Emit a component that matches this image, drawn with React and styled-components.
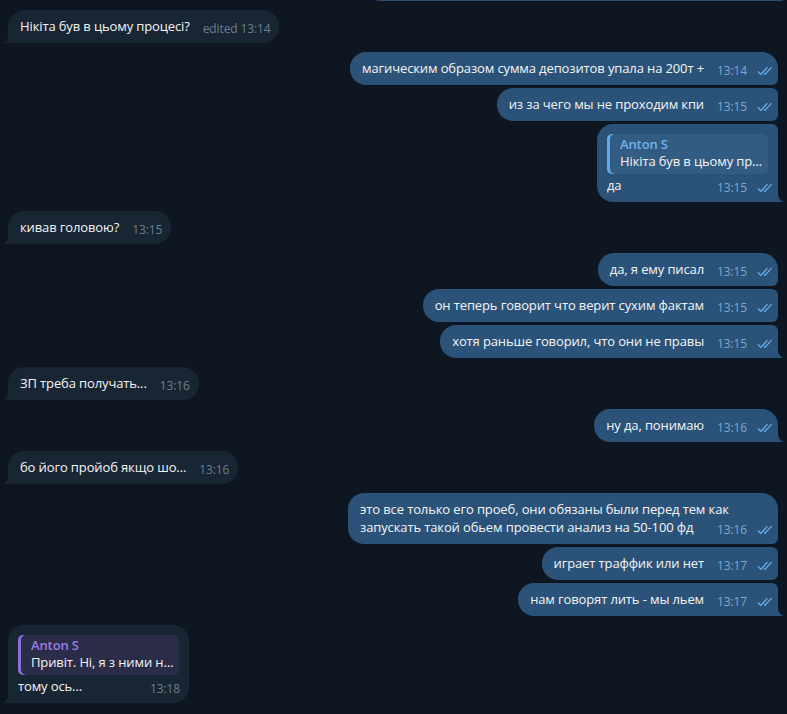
import React from 'react';
import styled, { createGlobalStyle } from 'styled-components';

const GlobalStyle = createGlobalStyle`
  html, body {
    margin: 0;
    padding: 0;
    background: #0e1621;
  }
  body {
    font-family: "Open Sans", "Noto Sans", sans-serif;
  }
`;

const Chat = styled.div`
  height: 714px;
  overflow: hidden;
  display: flex;
  flex-direction: column;
  justify-content: flex-end;
  padding: 0 9px 11px 8px;
  box-sizing: border-box;
  background: #0e1621;
`;

const Row = styled.div`
  display: flex;
  flex-shrink: 0;
  justify-content: ${p => (p.$out ? 'flex-end' : 'flex-start')};
  margin-top: ${p => (p.$groupStart ? '9px' : '3px')};
`;

const BIG = 16;
const SMALL = 6;

const radius = (out, pos) => {
  if (!out) return `${BIG}px ${BIG}px ${BIG}px 0`;
  const tr = pos === 'first' || pos === 'single' ? BIG : SMALL;
  const br = pos === 'last' || pos === 'single' ? 0 : SMALL;
  return `${BIG}px ${tr}px ${br}px ${BIG}px`;
};

const Bubble = styled.div`
  position: relative;
  display: flow-root;
  box-sizing: border-box;
  max-width: 430px;
  padding: ${p => (p.$reply ? '10px' : '7px')} ${p => (p.$out ? '5px' : '9px')} 6px
    ${p => (p.$reply ? '10px' : '12px')};
  background: ${p => (p.$out ? '#2b5278' : '#182533')};
  border-radius: ${p => radius(p.$out, p.$pos)};
  color: #f5f5f5;
  font-size: 13px;
  line-height: 18px;
  letter-spacing: -0.12px;
`;

const Tail = styled.svg`
  position: absolute;
  bottom: 0;
  ${p => (p.$out ? 'right: -6px;' : 'left: -6px;')}
  width: 6px;
  height: 9px;
  fill: ${p => (p.$out ? '#2b5278' : '#182533')};
`;

const Quote = styled.div`
  box-sizing: border-box;
  width: 161px;
  margin: 0 ${p => (p.$out ? '5px' : '1px')} 2px 0;
  padding: 2px 4px 4px 13px;
  border-radius: 5px;
  background: ${p => (p.$out ? '#335c83' : '#2b2c47')};
  box-shadow: inset 3px 0 0 ${p => (p.$out ? '#63aaea' : '#8c6fd8')};
  line-height: 17px;
`;

const QuoteName = styled.div`
  font-weight: 600;
  color: ${p => (p.$out ? '#6fb2ee' : '#9b7ce8')};
`;

const QuoteText = styled.div`
  white-space: nowrap;
  overflow: hidden;
  text-overflow: ellipsis;
`;

const Text = styled.div``;

const Meta = styled.span`
  float: right;
  display: flex;
  align-items: center;
  gap: 10px;
  margin: 4px 0 0 13px;
  font-size: 12px;
  line-height: 16px;
  color: ${p => (p.$out ? '#7da8d3' : '#6d7f8f')};
`;

const Checks = () => (
  <svg width="16" height="10" viewBox="0 0 16 10" fill="none" stroke="#6ab2f2"
    strokeWidth="1.3" strokeLinecap="round" strokeLinejoin="round">
    <path d="M1.2 5.6L3.9 8.4L10 1.6" />
    <path d="M7.4 7.9L7.9 8.4L14.2 1.6" />
  </svg>
);

const messages = [
  { out: true, pos: 'last', text: 'а потом ещё и отчёт надо переделывать полностью', time: '13:13' },
  { out: false, text: 'Нікіта був в цьому процесі?', time: 'edited 13:14' },
  { out: true, pos: 'first', text: 'магическим образом сумма депозитов упала на 200т +', time: '13:14' },
  { out: true, pos: 'middle', text: 'из за чего мы не проходим кпи', time: '13:15' },
  { out: true, pos: 'last', reply: { name: 'Anton S', text: 'Нікіта був в цьому процесі?' }, text: 'да', time: '13:15' },
  { out: false, text: 'кивав головою?', time: '13:15' },
  { out: true, pos: 'first', text: 'да, я ему писал', time: '13:15' },
  { out: true, pos: 'middle', text: 'он теперь говорит что верит сухим фактам', time: '13:15' },
  { out: true, pos: 'last', text: 'хотя раньше говорил, что они не правы', time: '13:15' },
  { out: false, text: 'ЗП треба получать...', time: '13:16' },
  { out: true, pos: 'single', text: 'ну да, понимаю', time: '13:16' },
  { out: false, text: 'бо його пройоб якщо шо...', time: '13:16' },
  { out: true, pos: 'first', text: 'это все только его проеб, они обязаны были перед тем как запускать такой обьем провести анализ на 50-100 фд', time: '13:16' },
  { out: true, pos: 'middle', text: 'играет траффик или нет', time: '13:17' },
  { out: true, pos: 'last', text: 'нам говорят лить - мы льем', time: '13:17' },
  { out: false, reply: { name: 'Anton S', text: 'Привіт. Ні, я з ними не працюю' }, text: 'тому ось...', time: '13:18' },
];

function Message({ m, groupStart }) {
  const pos = m.out ? m.pos : 'single';
  const hasTail = !m.out || pos === 'last' || pos === 'single';
  return (
    <Row $out={m.out} $groupStart={groupStart}>
      <Bubble $out={m.out} $pos={pos} $reply={!!m.reply}>
        {m.reply && (
          <Quote $out={m.out}>
            <QuoteName $out={m.out}>{m.reply.name}</QuoteName>
            <QuoteText>{m.reply.text}</QuoteText>
          </Quote>
        )}
        <Text>
          {m.text}
          <Meta $out={m.out}>
            {m.time}
            {m.out && <Checks />}
          </Meta>
        </Text>
        {hasTail && (
          <Tail $out={m.out} viewBox="0 0 6 9">
            {m.out
              ? <path d="M0 0C0 5 2 8 6 9L0 9Z" />
              : <path d="M6 0C6 5 4 8 0 9L6 9Z" />}
          </Tail>
        )}
      </Bubble>
    </Row>
  );
}

export default function App() {
  return (
    <>
      <GlobalStyle />
      <Chat>
        {messages.map((m, i) => (
          <Message
            key={i}
            m={m}
            groupStart={i > 0 && messages[i - 1].out !== m.out}
          />
        ))}
      </Chat>
    </>
  );
}
